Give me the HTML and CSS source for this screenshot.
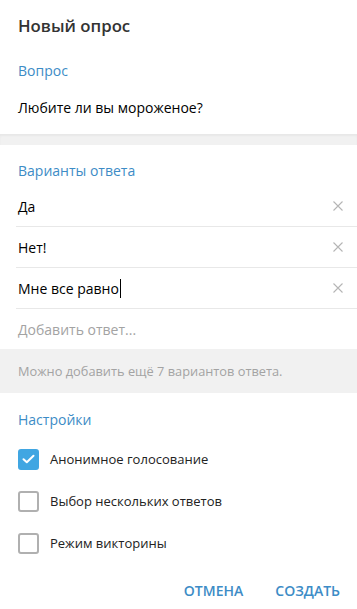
FILE: index.html
```html
<!DOCTYPE html>
<html lang="ru">
<head>
  <meta charset="UTF-8" />
  <meta name="viewport" content="width=device-width, initial-scale=1.0" />
  <link rel="stylesheet" href="styles.css">
  <title>Новый опрос</title>
</head>
<body>
<div class="poll-box">
  <h1 class="poll-title">Новый опрос</h1>

  <div class="section">
    <div class="section-label">Вопрос</div>
    <div class="question">Любите ли вы мороженое?</div>
  </div>

  <div class="divider"></div>

  <div class="section options">
    <div class="section-label">Варианты ответа</div>
    <div class="option">
      <span>Да</span>
      <span class="remove"><svg width="10" height="10" viewBox="0 0 10 10"><path d="M0.5 0.5L9.5 9.5M9.5 0.5L0.5 9.5" /></svg></span>
    </div>
    <div class="option">
      <span>Нет!</span>
      <span class="remove"><svg width="10" height="10" viewBox="0 0 10 10"><path d="M0.5 0.5L9.5 9.5M9.5 0.5L0.5 9.5" /></svg></span>
    </div>
    <div class="option">
      <span class="typing">Мне все равно</span>
      <span class="remove"><svg width="10" height="10" viewBox="0 0 10 10"><path d="M0.5 0.5L9.5 9.5M9.5 0.5L0.5 9.5" /></svg></span>
    </div>
    <div class="option add">
      <span>Добавить ответ...</span>
    </div>
  </div>

  <div class="hint">Можно добавить ещё 7 вариантов ответа.</div>

  <div class="section">
    <div class="section-label">Настройки</div>
    <div class="setting">
      <span class="checkbox checked"><svg width="13" height="10" viewBox="0 0 13 10"><path d="M1.5 5.2L4.8 8.3L11.5 1.7" /></svg></span>
      <span>Анонимное голосование</span>
    </div>
    <div class="setting">
      <span class="checkbox"></span>
      <span>Выбор нескольких ответов</span>
    </div>
    <div class="setting">
      <span class="checkbox"></span>
      <span>Режим викторины</span>
    </div>
  </div>

  <div class="actions">
    <button class="btn">Отмена</button>
    <button class="btn">Создать</button>
  </div>
</div>
</body>
</html>
```

FILE: styles.css
```css
/* General body styling */
body {
  font-family: 'Open Sans', 'Noto Sans', Arial, sans-serif;
  margin: 0;
  padding: 0;
  background: #fff;
  color: #000;
}

.poll-box {
  width: 357px;
}

/* Title */
.poll-title {
  margin: 0;
  padding: 16px 18px 0;
  font-size: 16.8px;
  font-weight: 600;
  line-height: 20px;
  color: #333;
}

.section {
  padding: 0 0 0 18px;
}

.section-label {
  margin-top: 25px;
  font-size: 14px;
  line-height: 20px;
  color: #3d8cc6;
}

.question {
  margin-top: 17px;
  margin-bottom: 16px;
  font-size: 14px;
  line-height: 20px;
}

/* Grey separators */
.divider {
  height: 11px;
  background-color: #f1f1f1;
  box-shadow: inset 0 2px 2px rgba(0, 0, 0, 0.04);
}

.options {
  padding-left: 16px;
}

.options .section-label {
  margin-top: 16px;
  margin-bottom: 5px;
  padding-left: 2px;
}

.option {
  display: flex;
  align-items: center;
  justify-content: space-between;
  height: 40px;
  padding-left: 2px;
  border-bottom: 1px solid #e8e8e8;
  font-size: 14px;
}

.option.add {
  border-bottom: none;
  color: #a3a3a3;
}

.typing {
  border-right: 1px solid #000;
  padding-right: 1px;
}

.remove {
  display: flex;
  width: 10px;
  height: 10px;
  margin-right: 14px;
}

.remove path {
  stroke: #b5b5b5;
  stroke-width: 1.1;
  fill: none;
}

.hint {
  height: 44px;
  padding-left: 18px;
  display: flex;
  align-items: center;
  background-color: #f1f1f1;
  font-size: 12.8px;
  color: #a3a3a3;
}

.hint + .section .section-label {
  margin-top: 17px;
  margin-bottom: 8px;
}

/* Settings */
.setting {
  display: flex;
  align-items: center;
  gap: 11px;
  height: 42px;
  font-size: 13px;
  color: #222;
}

.checkbox {
  box-sizing: border-box;
  width: 21px;
  height: 21px;
  border: 2px solid #b0b0b0;
  border-radius: 3px;
  display: flex;
  align-items: center;
  justify-content: center;
}

.checkbox.checked {
  border-color: #40a6e2;
  background-color: #40a6e2;
}

.checkbox path {
  stroke: #fff;
  stroke-width: 2;
  fill: none;
  stroke-linecap: round;
  stroke-linejoin: round;
}

/* Buttons */
.actions {
  display: flex;
  justify-content: flex-end;
  gap: 32px;
  padding: 8px 17px 0 0;
}

.btn {
  padding: 0;
  height: 36px;
  background: none;
  border: none;
  font-family: inherit;
  font-size: 14px;
  font-weight: 600;
  text-transform: uppercase;
  color: #3d8cc6;
  cursor: pointer;
}
```
